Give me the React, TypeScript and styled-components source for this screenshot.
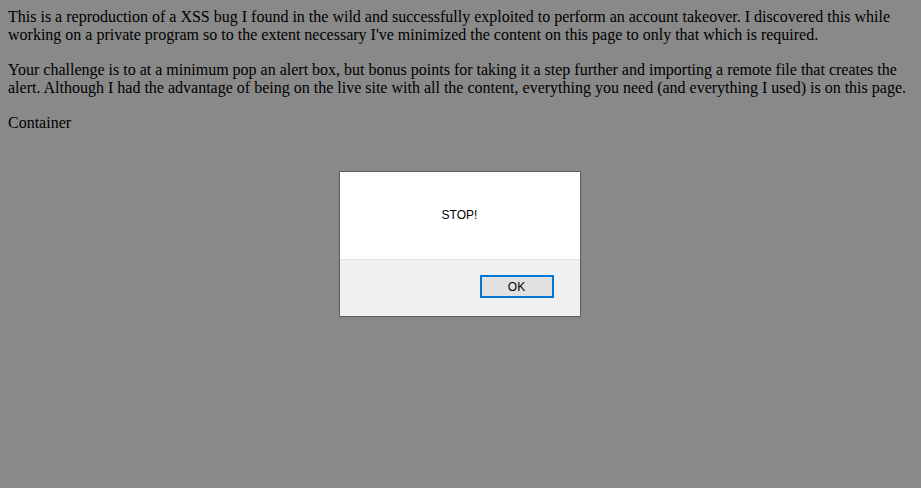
import React from "react";
import styled, { createGlobalStyle } from "styled-components";

const Global = createGlobalStyle`
  html, body { margin: 0; padding: 0; }
  body {
    background: #ffffff;
    font-family: "Liberation Serif", "Times New Roman", serif;
    font-size: 16px;
    color: #000;
  }
`;

const Page = styled.div`
  padding: 8px;
  min-height: 488px;
  box-sizing: border-box;
`;

const Para = styled.p`
  margin: 0 0 16px 0;
  line-height: 18.4px;
`;

const ContainerLabel = styled.div`
  line-height: 18.4px;
`;

const Overlay = styled.div`
  position: fixed;
  inset: 0;
  background: rgba(0, 0, 0, 0.463);
  display: flex;
  justify-content: center;
  align-items: flex-start;
  padding-top: 171px;
  padding-right: 2px;
`;

const Dialog = styled.div`
  width: 240px;
  height: 144px;
  border: 1px solid #5f5f5f;
  background: #f0f0f0;
  display: flex;
  flex-direction: column;
  font-family: "Liberation Sans", Arial, sans-serif;
  font-size: 12px;
  color: #000;
`;

const Body = styled.div`
  height: 88px;
  background: #ffffff;
  border-bottom: 1px solid #dfdfdf;
  display: flex;
  align-items: center;
  justify-content: center;
  padding-bottom: 2px;
  box-sizing: border-box;
`;

const Footer = styled.div`
  flex: 1;
  display: flex;
  justify-content: flex-end;
  align-items: flex-start;
  padding: 15px 26px 0 0;
`;

const Button = styled.button`
  width: 74px;
  height: 23px;
  border: 2px solid #0078d7;
  background: #e1e1e1;
  font-family: "Liberation Sans", Arial, sans-serif;
  font-size: 12px;
  color: #000;
  padding: 0;
  margin: 0;
`;

export default function App() {
  return (
    <>
      <Global />
      <Page>
        <Para>
          This is a reproduction of a XSS bug I found in the wild and successfully exploited to perform an account takeover. I discovered this while working on a private program so to the extent necessary I've minimized the content on this page to only that which is required.
        </Para>
        <Para>
          Your challenge is to at a minimum pop an alert box, but bonus points for taking it a step further and importing a remote file that creates the alert. Although I had the advantage of being on the live site with all the content, everything you need (and everything I used) is on this page.
        </Para>
        <ContainerLabel>Container</ContainerLabel>
      </Page>
      <Overlay>
        <Dialog>
          <Body>STOP!</Body>
          <Footer>
            <Button>OK</Button>
          </Footer>
        </Dialog>
      </Overlay>
    </>
  );
}
